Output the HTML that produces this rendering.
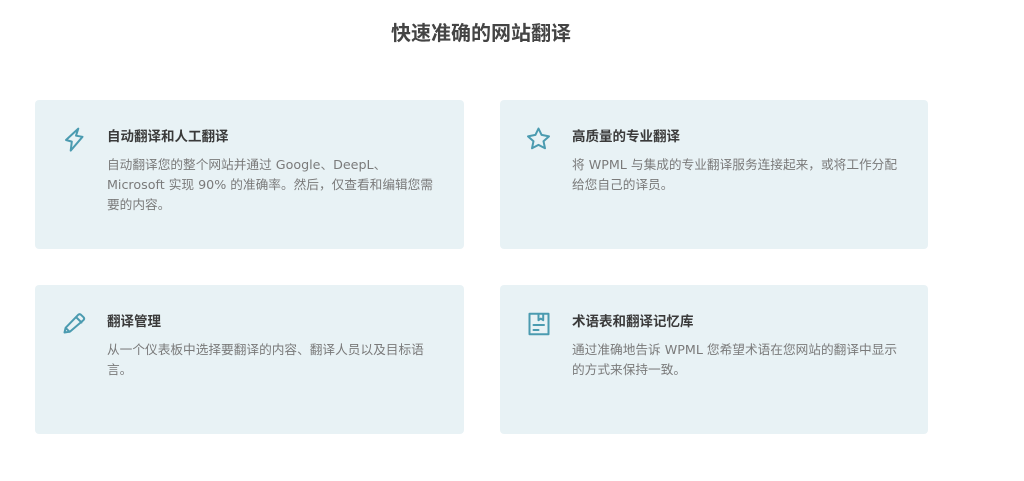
<!DOCTYPE html>
<html lang="zh">
<head>
<meta charset="utf-8">
<style>
html,body{margin:0;padding:0;background:#fff;}
body{width:1024px;height:481px;position:relative;overflow:hidden;font-family:"DejaVu Sans","Noto Sans CJK SC",sans-serif;}
h1{position:absolute;left:0;top:19px;width:962px;margin:0;text-align:center;font-size:20px;line-height:28px;font-weight:700;color:#444;}
.card{position:absolute;width:429px;height:149px;background:#e8f2f5;border-radius:4px;}
.c1{left:35px;top:100px}
.c2{left:500px;top:100px;width:428px}
.c3{left:35px;top:285px}
.c4{left:500px;top:285px;width:428px}
h3{position:absolute;left:72px;top:27px;margin:0;font-size:13.5px;line-height:20px;font-weight:700;color:#3a3a3a;white-space:nowrap;}
p{position:absolute;left:72px;top:55px;margin:0;font-size:12.68px;line-height:20px;color:#7a7a7a;white-space:nowrap;}
svg{position:absolute;left:26px;top:26px;width:26px;height:26px;fill:none;stroke:#4b9bb0;stroke-width:2;stroke-linejoin:round;stroke-linecap:round;}
</style>
</head>
<body>
<h1>快速准确的网站翻译</h1>

<div class="card c1">
<svg viewBox="0 0 26 26"><path d="M17.3 2.6 L5 14 L10.8 15.6 L9.7 24.6 L21.5 10.8 L15 9.7 Z"/></svg>
<h3>自动翻译和人工翻译</h3>
<p>自动翻译您的整个网站并通过 Google、DeepL、<br>Microsoft 实现 90% 的准确率。然后，仅查看和编辑您需<br>要的内容。</p>
</div>

<div class="card c2">
<svg viewBox="0 0 26 26"><path d="M12.5 2.5 L15.6 8.9 L23 10.4 L17.5 15.2 L19 22.3 L12.5 18.9 L6 22.3 L7.5 15.2 L2 10.4 L9.4 8.9 Z"/></svg>
<h3>高质量的专业翻译</h3>
<p>将 WPML 与集成的专业翻译服务连接起来，或将工作分配<br>给您自己的译员。</p>
</div>

<div class="card c3">
<svg viewBox="0 0 26 26"><path d="M3.5 21.5 L4.6 16.8 L17.2 3.8 Q18.6 2.6 20 3.8 L22.5 6.2 Q23.8 7.6 22.6 9 L9 20.6 Z M15 6 L20.5 11.5 M4.6 16.8 L8.6 20.8"/></svg>
<h3>翻译管理</h3>
<p>从一个仪表板中选择要翻译的内容、翻译人员以及目标语<br>言。</p>
</div>

<div class="card c4">
<svg viewBox="0 0 26 26"><path d="M3.5 2.8 H22.5 V23.2 H3.5 Z M12.5 2.8 V9.2 L14.8 7.6 L17.2 9.2 V2.8 M7.5 14 H18 M7.5 19 H12.5"/></svg>
<h3>术语表和翻译记忆库</h3>
<p>通过准确地告诉 WPML 您希望术语在您网站的翻译中显示<br>的方式来保持一致。</p>
</div>
</body>
</html>
